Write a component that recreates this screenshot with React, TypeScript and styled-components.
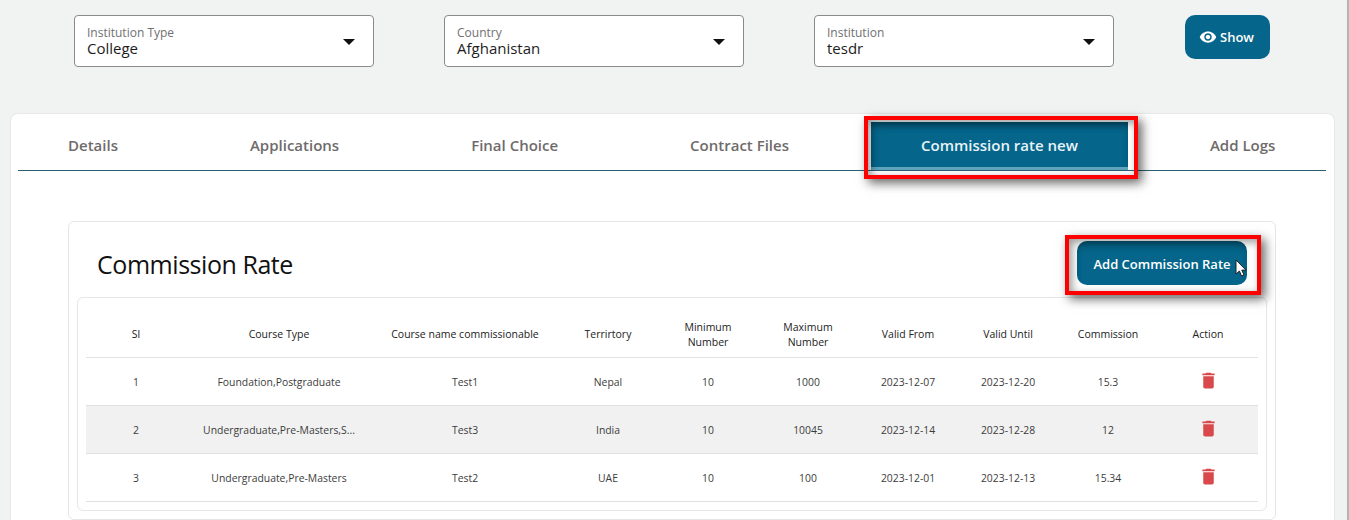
import { createGlobalStyle, styled } from 'styled-components'

const GlobalStyle = createGlobalStyle`
    html, body {
        margin: 0;
        padding: 0;
        background-color: #f1f3f3;
        font-family: 'Open Sans', 'Noto Sans', sans-serif;
    }
`

const Page = styled.div`
    width: 1349px;
    height: 520px;
    overflow: hidden;
    box-sizing: border-box;
    padding: 15px 12px 0 10px;
    border-right: 2px solid #b4b4b4;
`

const FilterRow = styled.div`
    display: flex;
    align-items: flex-start;
    gap: 70px;
    padding-left: 64px;
    height: 98px;
`

const SelectBox = styled.div`
    box-sizing: border-box;
    width: 300px;
    height: 52px;
    background-color: #fff;
    border: 1px solid #8a8a8a;
    border-radius: 4px;
    padding: 10px 12px 0;
    position: relative;
`

const SelectLabel = styled.div`
    font-size: 12px;
    line-height: 13px;
    color: #707070;
`

const SelectValue = styled.div`
    font-size: 15px;
    line-height: 18px;
    color: #1d1d1d;
`

const Caret = styled.span`
    position: absolute;
    right: 18px;
    top: 23px;
    border-left: 6px solid transparent;
    border-right: 6px solid transparent;
    border-top: 6px solid #111;
`

const ShowButton = styled.button`
    display: flex;
    align-items: center;
    justify-content: center;
    gap: 3px;
    width: 85px;
    height: 44px;
    margin-left: 1px;
    padding: 0 2px 0 0;
    border: none;
    border-radius: 10px;
    background-color: #05658a;
    color: #fff;
    font-family: inherit;
    font-size: 13px;
    font-weight: 600;
`

const Card = styled.div`
    box-sizing: border-box;
    width: 1325px;
    height: 440px;
    background-color: #fff;
    border: 1px solid #e8e8e8;
    border-bottom: none;
    border-radius: 8px 8px 0 0;
    padding: 8px 8px 0 7px;
`

const TabBar = styled.div`
    display: flex;
    gap: 32px;
    height: 48px;
    border-bottom: 1px solid #2b6075;
`

const Tab = styled.div<{ $active?: boolean }>`
    position: relative;
    box-sizing: border-box;
    display: flex;
    align-items: center;
    justify-content: center;
    height: 48px;
    padding: 0 50px;
    font-size: 15px;
    font-weight: 600;
    color: ${(p) => (p.$active ? '#e8f3f7' : '#6f6b6b')};
    background-color: ${(p) => (p.$active ? '#05658a' : 'transparent')};
    border-bottom: 3px solid ${(p) => (p.$active ? '#5fa3bc' : 'transparent')};
    box-shadow: ${(p) => (p.$active ? 'inset 0 6px 8px -4px rgba(0, 0, 0, 0.35)' : 'none')};
`

const Highlight = styled.span<{ $inset: string }>`
    position: absolute;
    inset: ${(p) => p.$inset};
    border: 4px solid #ff0000;
    box-shadow:
        4px 4px 10px rgba(0, 0, 0, 0.6),
        inset 3px 3px 8px rgba(0, 0, 0, 0.4);
    pointer-events: none;
`

const InnerCard = styled.div`
    box-sizing: border-box;
    width: 1208px;
    height: 299px;
    margin: 50px 0 0 50px;
    border: 1px solid #e6e6e6;
    border-radius: 6px;
    padding: 0 8px;
`

const TitleRow = styled.div`
    display: flex;
    align-items: center;
    justify-content: space-between;
    height: 75px;
    padding: 0 20px;
`

const Title = styled.h2`
    margin: 8px 0 0;
    font-size: 25px;
    font-weight: 500;
    letter-spacing: -0.45px;
    color: #111;
`

const AddButton = styled.button`
    position: relative;
    box-sizing: border-box;
    width: 170px;
    height: 44px;
    margin-top: 7px;
    border: none;
    border-radius: 10px;
    background-color: #05658a;
    color: #fff;
    font-family: inherit;
    font-size: 13px;
    font-weight: 600;
    box-shadow: inset 0 6px 8px -4px rgba(0, 0, 0, 0.3);
    padding: 2px 16px 0;
    white-space: nowrap;
`

const Pointer = styled.svg`
    position: absolute;
    right: 0;
    top: 18px;
`

const TableBox = styled.div`
    box-sizing: border-box;
    width: 1190px;
    height: 214px;
    border: 1px solid #e6e6e6;
    border-radius: 6px;
    padding: 0 8px;
`

const Table = styled.table`
    width: 1172px;
    table-layout: fixed;
    border-collapse: collapse;
    font-size: 10.5px;
    color: #2a2a2a;
`

const Col = styled.col<{ $w: number }>`
    width: ${(p) => p.$w}px;
`

const HeadCell = styled.th`
    height: 59px;
    padding: 15px 16px 0;
    box-sizing: border-box;
    font-weight: 400;
    line-height: 15px;
    text-align: center;
    color: #222;
    border-bottom: 1px solid #e3e3e3;
`

const Row = styled.tr<{ $shaded?: boolean }>`
    background-color: ${(p) => (p.$shaded ? '#f1f1f1' : '#fff')};
`

const Cell = styled.td`
    box-sizing: border-box;
    height: 48px;
    padding: 2px 0 0;
    font-size: 10.4px;
    text-align: center;
    color: #3c3c3c;
    border-bottom: 1px solid #e0e0e0;
`

const DeleteIcon = styled.svg`
    display: block;
    margin: -3px auto 0;
`

const colWidths = [100, 186, 186, 100, 100, 100, 100, 100, 100, 100]

const headers = [
    'Sl',
    'Course Type',
    'Course name commissionable',
    'Terrirtory',
    'Minimum Number',
    'Maximum Number',
    'Valid From',
    'Valid Until',
    'Commission',
    'Action',
]

const rows = [
    ['1', 'Foundation,Postgraduate', 'Test1', 'Nepal', '10', '1000', '2023-12-07', '2023-12-20', '15.3'],
    ['2', 'Undergraduate,Pre-Masters,S...', 'Test3', 'India', '10', '10045', '2023-12-14', '2023-12-28', '12'],
    ['3', 'Undergraduate,Pre-Masters', 'Test2', 'UAE', '10', '100', '2023-12-01', '2023-12-13', '15.34'],
]

const filters = [
    { label: 'Institution Type', value: 'College' },
    { label: 'Country', value: 'Afghanistan' },
    { label: 'Institution', value: 'tesdr' },
]

const tabs = ['Details', 'Applications', 'Final Choice', 'Contract Files', 'Commission rate new', 'Add Logs']

export default function App() {
    return (
        <Page>
            <GlobalStyle />
            <FilterRow>
                {filters.map((f) => (
                    <SelectBox key={f.label}>
                        <SelectLabel>{f.label}</SelectLabel>
                        <SelectValue>{f.value}</SelectValue>
                        <Caret />
                    </SelectBox>
                ))}
                <ShowButton>
                    <svg width='18' height='18' viewBox='0 0 24 24' fill='#fff'>
                        <path d='M12 4.5C7 4.5 2.73 7.61 1 12c1.73 4.39 6 7.5 11 7.5s9.27-3.11 11-7.5c-1.73-4.39-6-7.5-11-7.5zM12 17c-2.76 0-5-2.24-5-5s2.24-5 5-5 5 2.24 5 5-2.24 5-5 5zm0-8c-1.66 0-3 1.34-3 3s1.34 3 3 3 3-1.34 3-3-1.34-3-3-3z' />
                    </svg>
                    Show
                </ShowButton>
            </FilterRow>

            <Card>
                <TabBar>
                    {tabs.map((t) => (
                        <Tab key={t} $active={t === 'Commission rate new'}>
                            {t}
                            {t === 'Commission rate new' && <Highlight $inset='-6px -10px -12px -7px' />}
                        </Tab>
                    ))}
                </TabBar>

                <InnerCard>
                    <TitleRow>
                        <Title>Commission Rate</Title>
                        <AddButton>
                            Add Commission Rate
                            <Pointer width='12' height='18' viewBox='0 0 12 18'>
                                <path d='M1 1v14l3.4-3 2.2 5 2.4-1-2.2-4.9H11z' fill='#fff' stroke='#222' strokeWidth='1' />
                            </Pointer>
                            <Highlight $inset='-6px -14px -10px -12px' />
                        </AddButton>
                    </TitleRow>

                    <TableBox>
                        <Table>
                            <colgroup>
                                {colWidths.map((w, i) => (
                                    <Col key={i} $w={w} />
                                ))}
                            </colgroup>
                            <thead>
                                <tr>
                                    {headers.map((h) => (
                                        <HeadCell key={h}>{h}</HeadCell>
                                    ))}
                                </tr>
                            </thead>
                            <tbody>
                                {rows.map((r, i) => (
                                    <Row key={r[0]} $shaded={i === 1}>
                                        {r.map((c, j) => (
                                            <Cell key={j}>{c}</Cell>
                                        ))}
                                        <Cell>
                                            <DeleteIcon width='21' height='21' viewBox='0 0 24 24' fill='#d9484a'>
                                                <path d='M6 19c0 1.1.9 2 2 2h8c1.1 0 2-.9 2-2V7H6v12zM19 4h-3.5l-1-1h-5l-1 1H5v2h14V4z' />
                                            </DeleteIcon>
                                        </Cell>
                                    </Row>
                                ))}
                            </tbody>
                        </Table>
                    </TableBox>
                </InnerCard>
            </Card>
        </Page>
    )
}
